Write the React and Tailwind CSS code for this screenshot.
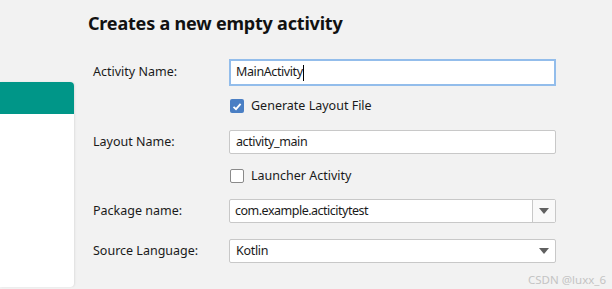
import React from "react";

const font = { fontFamily: '"Noto Sans", "Open Sans", sans-serif' };

function Arrow() {
  return (
    <svg width="10" height="6" viewBox="0 0 10 6">
      <path d="M0 0 L10 0 L5 6 Z" fill="#606060" />
    </svg>
  );
}

export default function App() {
  return (
    <div
      className="w-[612px] h-[289px] bg-[#f2f2f2] flex overflow-hidden relative"
      style={font}
    >
      <div className="w-[75px] shrink-0 pt-[82px] pb-[2px] flex">
        <div className="w-[74px] h-full bg-white rounded-r-[4px] overflow-hidden flex flex-col shadow-[1px_0_2px_rgba(0,0,0,0.08)]">
          <div className="h-[32px] bg-[#009688]" />
        </div>
      </div>
      <div className="flex-1 flex flex-col">
        <div className="pl-[13px] pt-[10px] h-[34px] text-[18px] leading-[26px] font-bold tracking-[-0.2px] text-[#111]">
          Creates a new empty activity
        </div>
        <div className="pl-[18px] flex flex-col text-[12.5px] text-[#1a1a1a]">
          <div className="mt-[25px] h-[27px] flex items-center">
            <div className="w-[136px]">Activity Name:</div>
            <div className="w-[327px] h-[27px] border-2 border-[#93bdeb] bg-white flex items-center pl-[5px] text-[12.5px] tracking-[-0.4px]">
              <span>MainActivity</span>
              <span className="w-px h-[16px] bg-black" />
            </div>
          </div>
          <div className="mt-[13px] h-[14px] flex items-center">
            <div className="w-[137px]" />
            <div className="w-[14px] h-[14px] rounded-[2px] bg-[#4a7fc4] flex items-center justify-center">
              <svg width="10" height="9" viewBox="0 0 10 9">
                <path d="M1.5 4.8 L4 7.2 L8.6 1.8" stroke="white" strokeWidth="1.8" fill="none" />
              </svg>
            </div>
            <div className="ml-[7px]">Generate Layout File</div>
          </div>
          <div className="mt-[17px] h-[24px] flex items-center">
            <div className="w-[136px]">Layout Name:</div>
            <div className="w-[327px] h-[24px] border border-[#c8c8c8] rounded-[2px] bg-white flex items-center pl-[6px] text-[12.5px] tracking-[-0.4px]">
              activity_main
            </div>
          </div>
          <div className="mt-[15px] h-[14px] flex items-center">
            <div className="w-[137px]" />
            <div className="w-[14px] h-[14px] rounded-[2px] border border-[#8a8a8a] bg-white" />
            <div className="ml-[7px]">Launcher Activity</div>
          </div>
          <div className="mt-[16px] h-[24px] flex items-center">
            <div className="w-[136px]">Package name:</div>
            <div className="w-[327px] h-[24px] border border-[#c8c8c8] rounded-[2px] bg-white flex items-center text-[12.5px] tracking-[-0.5px]">
              <div className="flex-1 pl-[5px]">com.example.acticitytest</div>
              <div className="w-[23px] h-full border-l border-[#c8c8c8] bg-[#f9f9f9] flex items-center justify-center">
                <Arrow />
              </div>
            </div>
          </div>
          <div className="mt-[16px] h-[24px] flex items-center">
            <div className="w-[136px]">Source Language:</div>
            <div className="w-[327px] h-[24px] border border-[#c8c8c8] rounded-[2px] bg-white flex items-center text-[12.5px] tracking-[-0.3px]">
              <div className="flex-1 pl-[6px]">Kotlin</div>
              <div className="w-[23px] h-full flex items-center justify-center">
                <Arrow />
              </div>
            </div>
          </div>
          <div className="mt-[8px] pr-[6px] flex justify-end text-[11.5px] text-[#c4c4c4]">
            CSDN @luxx_6
          </div>
        </div>
      </div>
    </div>
  );
}
